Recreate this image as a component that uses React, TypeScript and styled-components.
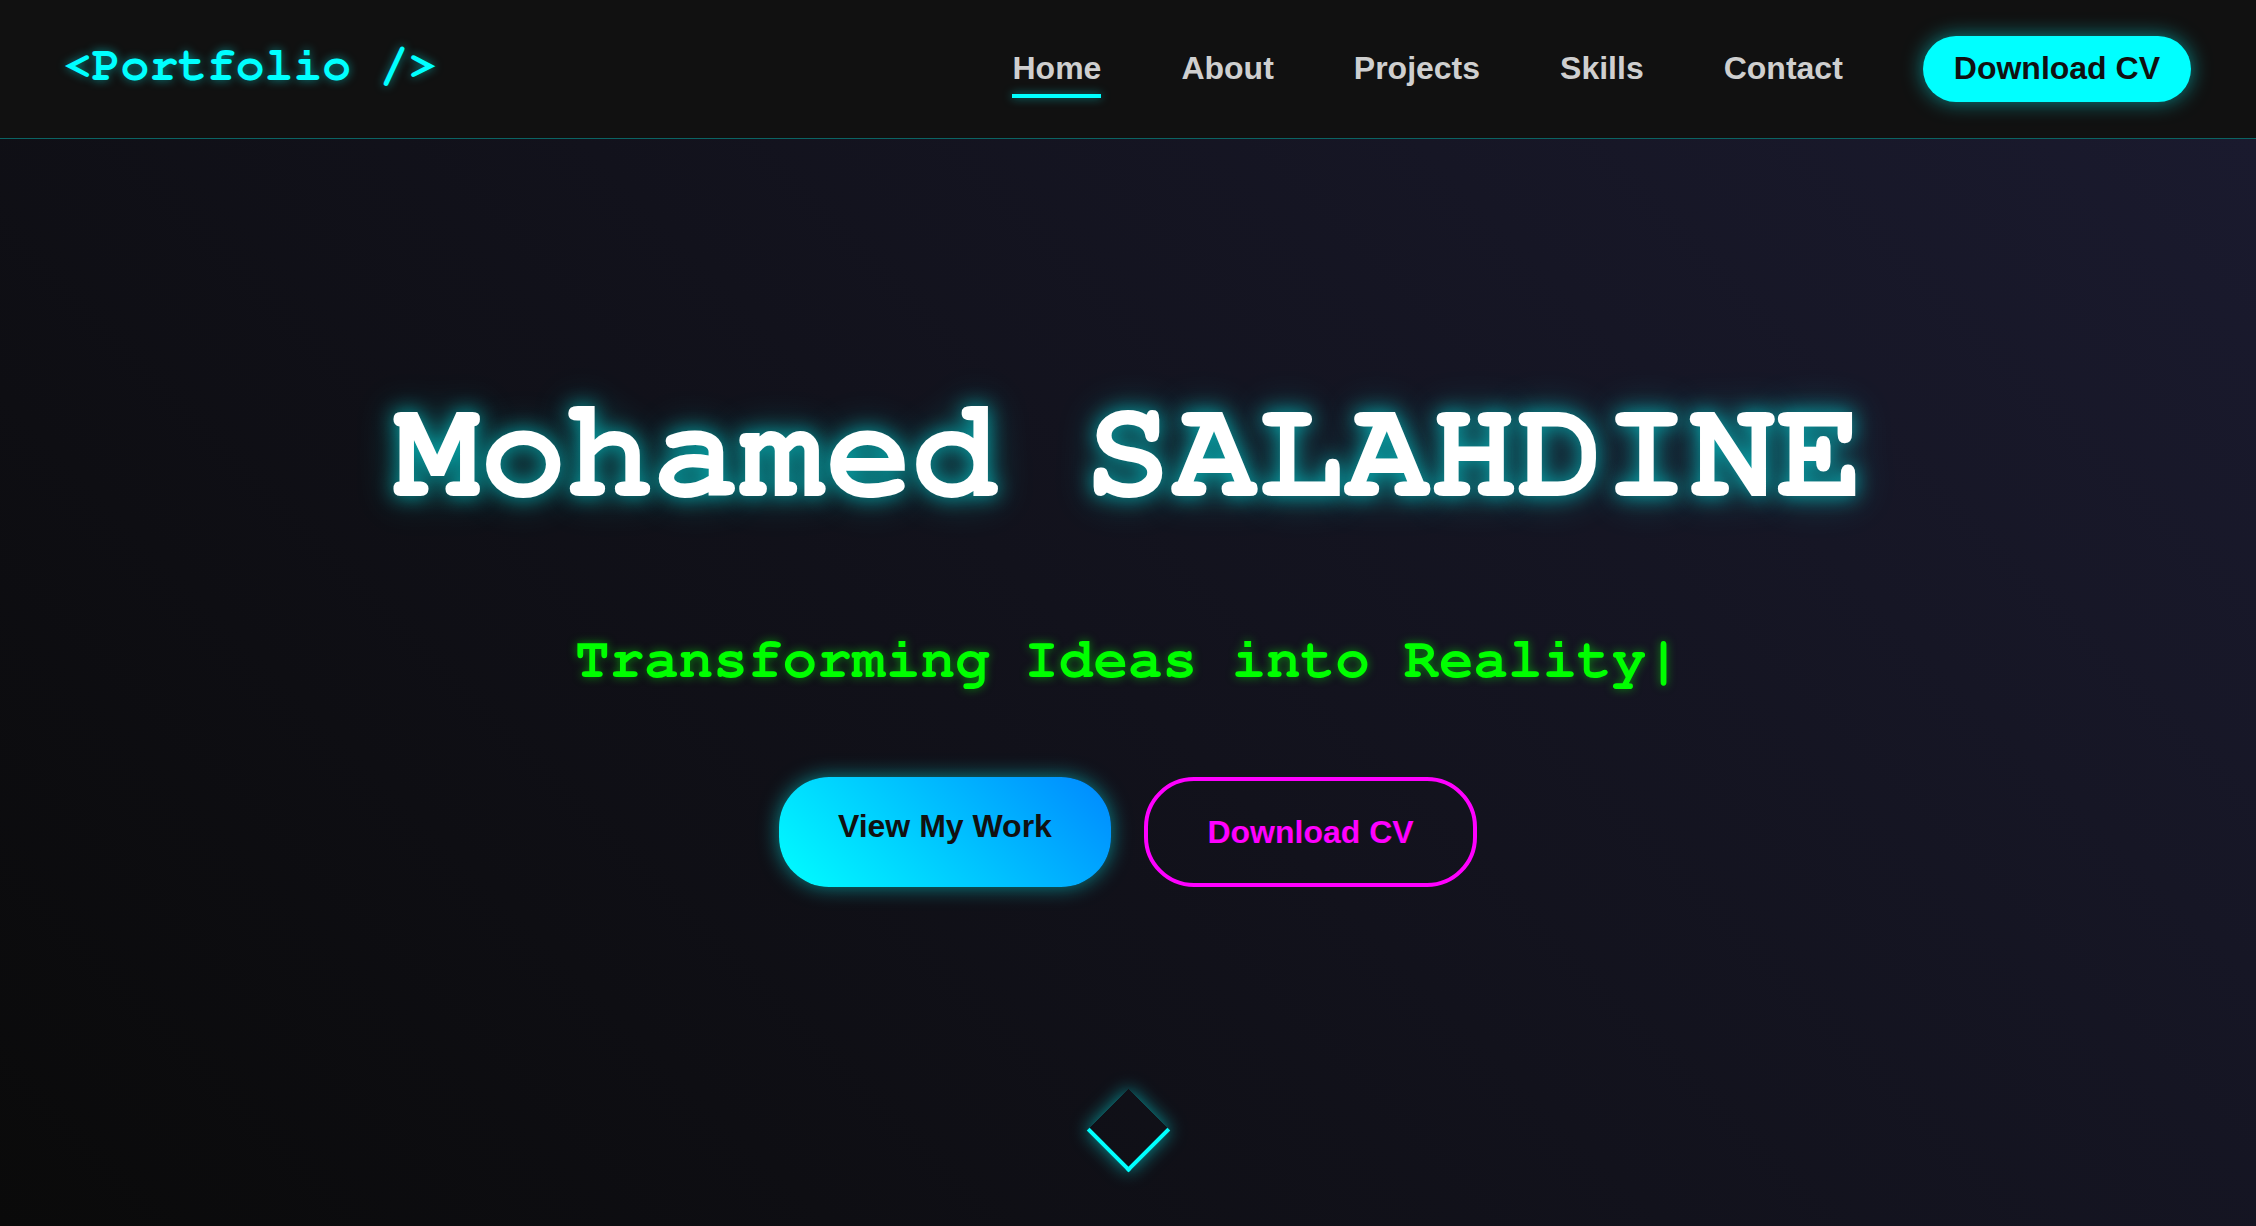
import React from "react";
import styled, { createGlobalStyle } from "styled-components";

const GlobalStyle = createGlobalStyle`
  html, body {
    margin: 0;
    padding: 0;
    background: #0a0a0a;
    overflow: hidden;
  }
  * { box-sizing: border-box; }
  #root { min-height: 100vh; }
`;

const mono = `"Nimbus Mono PS", "Nimbus Mono L", "FreeMono", "Courier 10 Pitch", "Courier", "Liberation Mono", monospace`;

const Page = styled.div`
  display: flex;
  flex-direction: column;
  height: 1226px;
  font-family: "Liberation Sans", Arial, sans-serif;
`;

const Header = styled.header`
  display: flex;
  align-items: center;
  justify-content: space-between;
  height: 139px;
  padding: 0 65px 1px 63px;
  background: #111111;
  border-bottom: 1px solid rgba(0, 255, 255, 0.35);
  flex-shrink: 0;
`;

const Logo = styled.div`
  font-family: ${mono};
  font-weight: 700;
  font-size: 48px;
  color: #00ffff;
  margin-bottom: 6px;
  text-shadow: 0 0 10px rgba(0, 255, 255, 0.5);
  white-space: pre;
`;

const Nav = styled.nav`
  display: flex;
  align-items: center;
  gap: 80px;
`;

const NavLink = styled.a<{ $active?: boolean }>`
  position: relative;
  font-size: 32px;
  font-weight: 700;
  color: #cfcfcf;
  text-decoration: none;
  line-height: normal;

  &::after {
    content: "";
    position: absolute;
    left: 0;
    bottom: -11px;
    height: 4px;
    width: ${(p) => (p.$active ? "100%" : "0")};
    background: #00ffff;
    box-shadow: 0 0 10px rgba(0, 255, 255, 0.5);
  }
`;

const NavButton = styled.a`
  font-size: 32px;
  font-weight: 700;
  color: #111111;
  background: #00ffff;
  padding: 14.5px 31px;
  border-radius: 40px;
  text-decoration: none;
  line-height: normal;
  box-shadow: 0 0 20px rgba(0, 255, 255, 0.5);
`;

const Hero = styled.main`
  flex: 1;
  display: flex;
  flex-direction: column;
  align-items: center;
  padding-top: 233px;
  background: linear-gradient(45deg, #0a0a0a, #1a1a2e);
`;

const Title = styled.h1`
  margin: 0;
  font-family: ${mono};
  font-weight: 700;
  font-size: 144px;
  line-height: 163px;
  color: #ffffff;
  white-space: pre;
  text-shadow: 0 0 20px rgba(0, 255, 255, 0.6), 0 0 40px rgba(0, 255, 255, 0.3);
`;

const Subtitle = styled.p`
  margin: 93px 0 0;
  font-family: ${mono};
  font-weight: 700;
  font-size: 57.6px;
  line-height: 65px;
  color: #00ff00;
  white-space: pre;
  text-shadow: 0 0 10px rgba(0, 255, 0, 0.5);
`;

const ButtonRow = styled.div`
  display: flex;
  gap: 33px;
  margin-top: 84px;
`;

const PrimaryButton = styled.a`
  display: inline-block;
  font-size: 32px;
  font-weight: 700;
  line-height: normal;
  color: #111111;
  text-decoration: none;
  padding: 31px 59px 42px;
  border-radius: 50px;
  background: linear-gradient(45deg, #00ffff, #0088ff);
  box-shadow: 0 0 20px rgba(0, 255, 255, 0.5);
`;

const OutlineButton = styled.a`
  display: inline-block;
  font-size: 32px;
  font-weight: 700;
  line-height: normal;
  color: #ff00ff;
  text-decoration: none;
  padding: 32.5px 59.5px;
  border-radius: 50px;
  border: 4px solid #ff00ff;
  background: transparent;
`;

const ScrollIndicator = styled.div`
  margin-top: 214px;
  width: 59px;
  height: 59px;
  border-right: 4px solid #00ffff;
  border-bottom: 4px solid #00ffff;
  transform: rotate(45deg);
  box-shadow: 0 0 18px rgba(0, 255, 255, 0.55);
`;

const links = ["Home", "About", "Projects", "Skills", "Contact"];

export default function App() {
  return (
    <>
      <GlobalStyle />
      <Page>
        <Header>
          <Logo>{"<Portfolio />"}</Logo>
          <Nav>
            {links.map((l) => (
              <NavLink key={l} href="#" $active={l === "Home"}>
                {l}
              </NavLink>
            ))}
            <NavButton href="#">Download CV</NavButton>
          </Nav>
        </Header>
        <Hero>
          <Title>Mohamed SALAHDINE</Title>
          <Subtitle>Transforming Ideas into Reality|</Subtitle>
          <ButtonRow>
            <PrimaryButton href="#">View My Work</PrimaryButton>
            <OutlineButton href="#">Download CV</OutlineButton>
          </ButtonRow>
          <ScrollIndicator />
        </Hero>
      </Page>
    </>
  );
}
